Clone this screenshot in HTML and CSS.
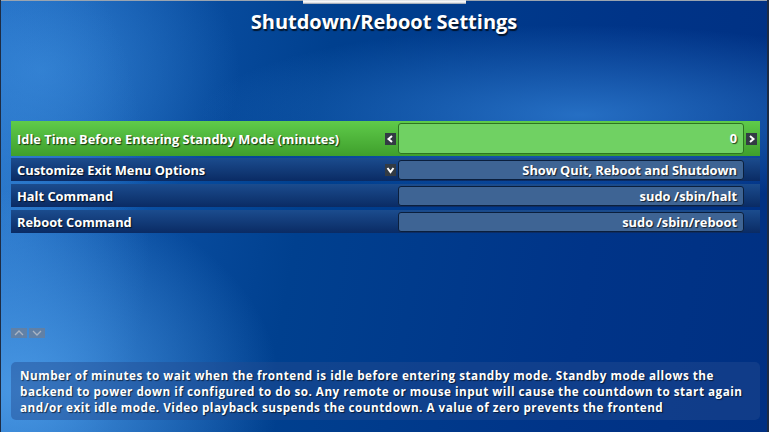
FILE: index.html
```html
<!DOCTYPE html>
<html lang="en">
<head>
  <meta charset="UTF-8" />
  <title>Shutdown/Reboot Settings</title>
  <link rel="stylesheet" href="styles.css">
</head>
<body>
  <div class="top-line"><div class="tab-mark"></div></div>
  <h1>Shutdown/Reboot Settings</h1>

  <div class="settings">
    <div class="row selected">
      <span class="label">Idle Time Before Entering Standby Mode (minutes)</span>
      <span class="arrow"><svg width="11" height="12" viewBox="0 0 11 12"><polyline points="7,3 3.5,6 7,9" /></svg></span>
      <span class="field">0</span>
      <span class="arrow"><svg width="11" height="12" viewBox="0 0 11 12"><polyline points="4,3 7.5,6 4,9" /></svg></span>
    </div>
    <div class="row">
      <span class="label">Customize Exit Menu Options</span>
      <span class="arrow"><svg width="11" height="12" viewBox="0 0 11 12"><polyline points="2.5,4 5.5,8 8.5,4" /></svg></span>
      <span class="field">Show Quit, Reboot and Shutdown</span>
      <span></span>
    </div>
    <div class="row">
      <span class="label">Halt Command</span>
      <span></span>
      <span class="field">sudo /sbin/halt</span>
      <span></span>
    </div>
    <div class="row">
      <span class="label">Reboot Command</span>
      <span></span>
      <span class="field">sudo /sbin/reboot</span>
      <span></span>
    </div>
  </div>

  <div class="scroll-arrows">
    <span class="scroll-btn"><svg width="16" height="10" viewBox="0 0 16 10"><polyline points="4,7 8,3 12,7" /></svg></span>
    <span class="scroll-btn"><svg width="16" height="10" viewBox="0 0 16 10"><polyline points="4,3 8,7 12,3" /></svg></span>
  </div>

  <div class="description">
    <div class="line">Number of minutes to wait when the frontend is idle before entering standby mode. Standby mode allows the</div>
    <div class="line">backend to power down if configured to do so. Any remote or mouse input will cause the countdown to start again</div>
    <div class="line">and/or exit idle mode. Video playback suspends the countdown. A value of zero prevents the frontend</div>
  </div>
</body>
</html>
```

FILE: styles.css
```css
html, body {
  margin: 0;
  padding: 0;
}

body {
  width: 769px;
  height: 432px;
  overflow: hidden;
  display: flex;
  flex-direction: column;
  font-family: "Open Sans", "DejaVu Sans", sans-serif;
  font-weight: bold;
  color: #fff;
  box-sizing: border-box;
  border-left: 1px solid #1d2c44;
  border-right: 2px solid #1d2c44;
  background-color: #003a8c;
  background-image:
    radial-gradient(ellipse 260px 200px at 20px 390px, rgba(80, 160, 235, 0.85), rgba(80, 160, 235, 0) 100%),
    radial-gradient(ellipse 140px 300px at 10px 220px, rgba(60, 140, 220, 0.55), rgba(60, 140, 220, 0) 100%),
    radial-gradient(ellipse 200px 160px at 40px 70px, rgba(60, 140, 220, 0.7), rgba(60, 140, 220, 0) 100%),
    radial-gradient(ellipse 380px 90px at 580px 115px, rgba(50, 130, 215, 0.75), rgba(50, 130, 215, 0) 100%),
    linear-gradient(100deg, #1660b8 0%, #00408f 40%, #003488 75%, #003082 100%);
}

.top-line {
  height: 1px;
  background: #9aa4b0;
  display: flex;
  justify-content: center;
}

.tab-mark {
  width: 163px;
  height: 4px;
  background: linear-gradient(#d8dde4, #ffffff 50%, #8b96a4);
}

h1 {
  margin: 8px 0 0;
  font-size: 20px;
  line-height: 26px;
  text-align: center;
  text-shadow: 1px 2px 1px rgba(0, 0, 0, 0.7);
}

.settings {
  margin: 86px 0 0 10px;
  width: 749px;
  display: flex;
  flex-direction: column;
  gap: 3px;
}

.row {
  display: grid;
  grid-template-columns: 366px 11px 346px 11px;
  column-gap: 2px;
  align-items: center;
  height: 23px;
  padding: 0 0 0 6px;
  background: linear-gradient(#1b4c8e, #0a2b64);
  font-size: 12.85px;
  text-shadow: 1px 1px 1px rgba(0, 0, 0, 0.7);
}

.row.selected {
  height: 35px;
  margin-bottom: -1px;
  background: linear-gradient(#5fcb4a, #3f9f2c);
}

.label {
  white-space: nowrap;
}

.arrow {
  display: flex;
  width: 11px;
  height: 12px;
  background: #333b44;
}

.arrow svg polyline {
  fill: none;
  stroke: #fff;
  stroke-width: 2;
}

.field {
  height: 18px;
  line-height: 18px;
  padding-right: 6px;
  text-align: right;
  white-space: nowrap;
  background: #3e6494;
  border: 1px solid #0b1f3c;
  border-radius: 3px;
}

.selected .field {
  height: 29px;
  line-height: 29px;
  background: #70d163;
  border-color: #2d7521;
}

.scroll-arrows {
  margin: 95px 0 0 10px;
  display: flex;
  gap: 2px;
}

.scroll-btn {
  display: flex;
  width: 16px;
  height: 10px;
  background: rgba(110, 125, 150, 0.75);
}

.scroll-btn svg polyline {
  fill: none;
  stroke: #a9b4c4;
  stroke-width: 1.3;
}

.description {
  margin: 24px 0 0 10px;
  width: 749px;
  height: 58px;
  box-sizing: border-box;
  padding: 5px 9px;
  border-radius: 5px;
  background: rgba(35, 75, 145, 0.45);
  font-size: 11.7px;
  letter-spacing: 0.5px;
  line-height: 16px;
  white-space: nowrap;
  text-shadow: 1px 1px 1px rgba(0, 0, 0, 0.6);
}

.line {
  height: 16px;
}
```
